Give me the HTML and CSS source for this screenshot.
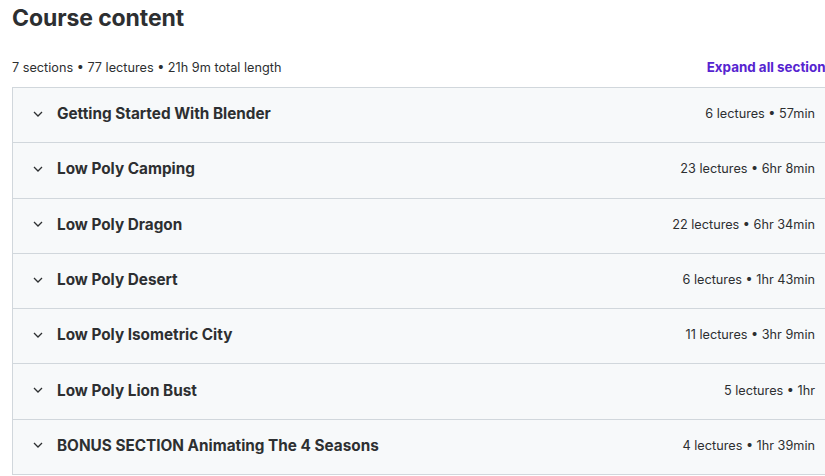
FILE: index.html
```html
<!DOCTYPE html>
<html>
<head>
<meta charset="utf-8">
<link rel="stylesheet" href="styles.css">
</head>
<body>
<div class="page">
  <h2 class="title">Course content</h2>
  <div class="summary">
    <span class="stats">7 sections • 77 lectures • 21h 9m total length</span>
    <button class="expand">Expand all sections</button>
  </div>
  <div class="sections">
    <div class="row"><span class="chev"><svg viewBox="0 0 10 6" width="10" height="6"><path d="M1 1l4 4 4-4" fill="none" stroke="currentColor" stroke-width="1.3"/></svg></span><span class="name">Getting Started With Blender</span><span class="meta">6 lectures • 57min</span></div>
    <div class="row"><span class="chev"><svg viewBox="0 0 10 6" width="10" height="6"><path d="M1 1l4 4 4-4" fill="none" stroke="currentColor" stroke-width="1.3"/></svg></span><span class="name">Low Poly Camping</span><span class="meta">23 lectures • 6hr 8min</span></div>
    <div class="row"><span class="chev"><svg viewBox="0 0 10 6" width="10" height="6"><path d="M1 1l4 4 4-4" fill="none" stroke="currentColor" stroke-width="1.3"/></svg></span><span class="name">Low Poly Dragon</span><span class="meta">22 lectures • 6hr 34min</span></div>
    <div class="row"><span class="chev"><svg viewBox="0 0 10 6" width="10" height="6"><path d="M1 1l4 4 4-4" fill="none" stroke="currentColor" stroke-width="1.3"/></svg></span><span class="name">Low Poly Desert</span><span class="meta">6 lectures • 1hr 43min</span></div>
    <div class="row"><span class="chev"><svg viewBox="0 0 10 6" width="10" height="6"><path d="M1 1l4 4 4-4" fill="none" stroke="currentColor" stroke-width="1.3"/></svg></span><span class="name">Low Poly Isometric City</span><span class="meta">11 lectures • 3hr 9min</span></div>
    <div class="row"><span class="chev"><svg viewBox="0 0 10 6" width="10" height="6"><path d="M1 1l4 4 4-4" fill="none" stroke="currentColor" stroke-width="1.3"/></svg></span><span class="name">Low Poly Lion Bust</span><span class="meta">5 lectures • 1hr</span></div>
    <div class="row"><span class="chev"><svg viewBox="0 0 10 6" width="10" height="6"><path d="M1 1l4 4 4-4" fill="none" stroke="currentColor" stroke-width="1.3"/></svg></span><span class="name">BONUS SECTION Animating The 4 Seasons</span><span class="meta">4 lectures • 1hr 39min</span></div>
  </div>
</div>
</body>
</html>
```

FILE: styles.css
```css
html, body {
  margin: 0;
  padding: 0;
  background: #fff;
  overflow: hidden;
}
body {
  font-family: Inter, "Noto Sans", sans-serif;
  color: #2d2f31;
}
.page {
  width: 821px;
  margin-left: 12px;
}
.title {
  margin: 0;
  padding-top: 4px;
  font-size: 23px;
  font-weight: 700;
  line-height: 28px;
  letter-spacing: -0.1px;
}
.summary {
  display: flex;
  justify-content: space-between;
  align-items: center;
  margin-top: 25px;
  height: 20px;
  margin-bottom: 10px;
}
.stats {
  font-size: 12.7px;
  color: #2d2f31;
}
.expand {
  border: 0;
  background: none;
  padding: 0;
  font-family: inherit;
  font-size: 13.4px;
  font-weight: 700;
  color: #5624d0;
  white-space: nowrap;
}
.sections {
  border-top: 1px solid #d1d7dc;
  border-left: 1px solid #d1d7dc;
}
.row {
  box-sizing: border-box;
  display: flex;
  align-items: center;
  height: 55.3px;
  background: #f7f9fa;
  border-bottom: 1px solid #d1d7dc;
  padding: 0 18px 3px 20px;
}
.chev {
  display: flex;
  width: 24px;
  color: #2d2f31;
}
.name {
  flex: 1;
  font-size: 15.3px;
  font-weight: 700;
}
.meta {
  font-size: 12.7px;
  color: #2d2f31;
}
```
